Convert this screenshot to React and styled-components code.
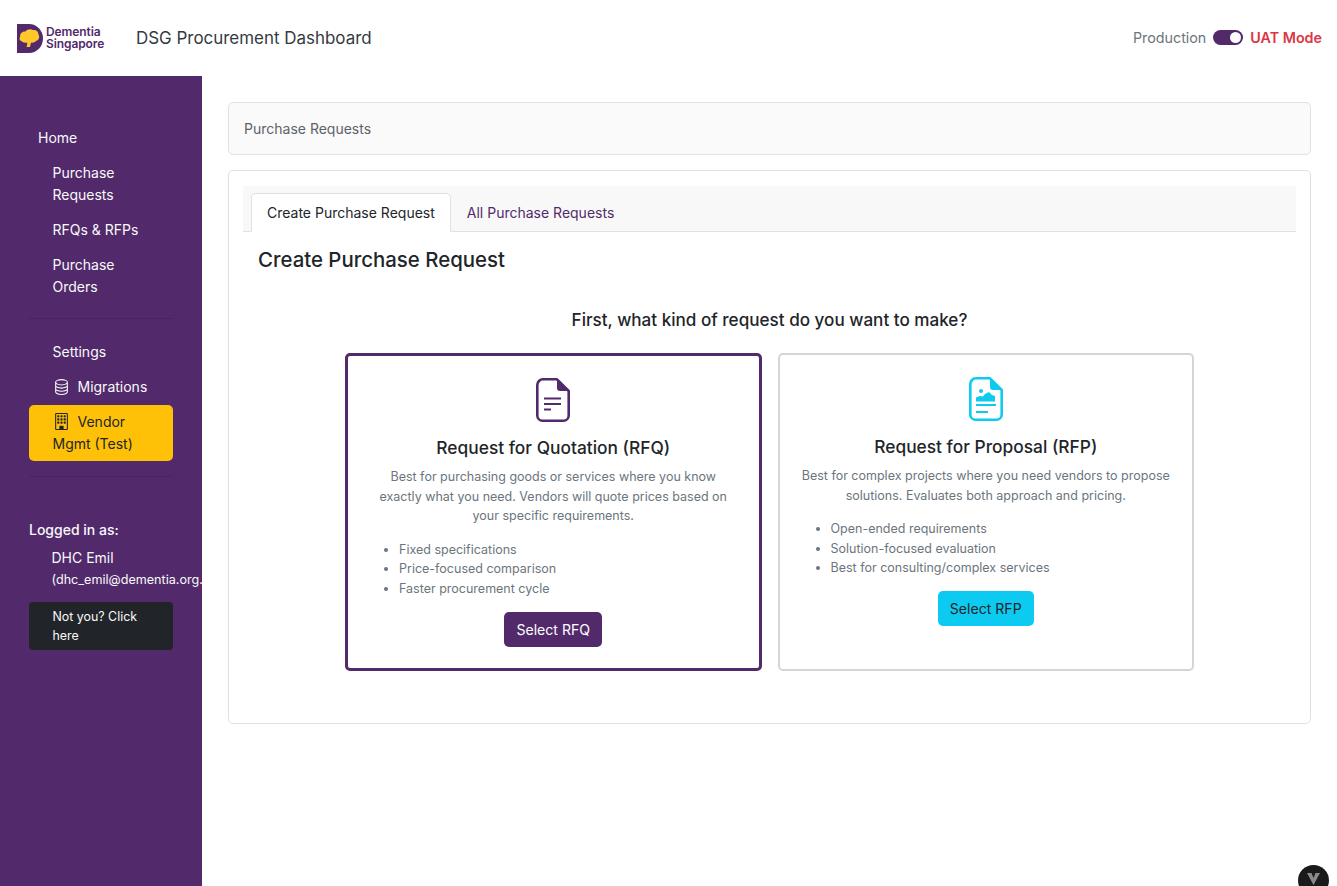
import React from 'react';
import styled, { createGlobalStyle } from 'styled-components';
import { BsDatabase, BsBuilding } from 'react-icons/bs';

const GlobalStyle = createGlobalStyle`
  * {
    box-sizing: border-box;
  }
  html,
  body {
    margin: 0;
    padding: 0;
    background: #fff;
    color: #212529;
    font-family: Inter, 'Liberation Sans', sans-serif;
    font-size: 14px;
  }
`;

const Page = styled.div`
  width: 1337px;
  height: 886px;
  overflow: hidden;
  position: relative;
  display: flex;
  flex-direction: column;
`;

const Header = styled.header`
  height: 76px;
  flex: none;
  display: flex;
  align-items: center;
  padding: 0 15px 0 17px;
`;

const Logo = styled.div`
  display: flex;
  align-items: center;
  gap: 2px;
  width: 119px;
`;

const LogoText = styled.div`
  color: #522a6b;
  font-size: 12px;
  font-weight: 600;
  line-height: 12px;
  letter-spacing: -0.1px;
`;

const Title = styled.div`
  font-size: 16.95px;
  color: #343a40;
  margin-top: -1px;
`;

const ModeSwitch = styled.div`
  margin-left: auto;
  display: flex;
  align-items: center;
  font-size: 14.3px;
  color: #6c757d;
  margin-top: -1px;
`;

const Toggle = styled.span`
  width: 30px;
  height: 15px;
  border-radius: 8px;
  background: #522a6b;
  margin: 0 7px;
  display: flex;
  justify-content: flex-end;
  align-items: center;
  padding: 0 2px;
  &::after {
    content: '';
    width: 11px;
    height: 11px;
    border-radius: 50%;
    background: #fff;
  }
`;

const ModeLabel = styled.span`
  color: #dc3545;
  font-weight: 600;
`;

const Body = styled.div`
  flex: 1;
  display: flex;
  min-height: 0;
`;

const Sidebar = styled.aside`
  width: 202px;
  flex: none;
  background: #522a6b;
  color: #f8f9fa;
  padding: 44.5px 29px 0;
`;

const NavGroup = styled.nav`
  display: flex;
  flex-direction: column;
`;

const NavLink = styled.a`
  display: block;
  color: #f8f9fa;
  font-size: 14px;
  line-height: 22px;
  padding: 6.5px 16px 6.5px ${(p) => (p.$top ? '9px' : '23.5px')};
`;

const IconGap = styled.span`
  display: inline-flex;
  vertical-align: -3px;
  margin-right: 8px;
  font-size: 17px;
`;

const Divider = styled.hr`
  border: 0;
  border-top: 1px solid rgba(0, 0, 0, 0.1);
  margin: ${(p) => p.$margin};
`;

const VendorButton = styled.a`
  display: block;
  background: #ffc107;
  color: #212529;
  border-radius: 5px;
  font-size: 14px;
  line-height: 22px;
  height: 56.5px;
  padding: 6.5px 16px 6.5px 23.5px;
`;

const LoggedLabel = styled.div`
  font-size: 14px;
  line-height: 21px;
  margin-bottom: 7px;
  font-weight: 500;
`;

const UserName = styled.div`
  font-size: 14px;
  line-height: 21px;
  padding-left: 22.5px;
  margin-bottom: 1px;
`;

const UserMail = styled.div`
  font-size: 12.6px;
  line-height: 21px;
  padding-left: 22.5px;
  white-space: nowrap;
  width: 173px;
  overflow: hidden;
`;

const NotYou = styled.a`
  display: block;
  margin-top: 12.5px;
  background: #212529;
  color: #f8f9fa;
  border-radius: 4px;
  font-size: 12.4px;
  line-height: 19px;
  height: 48px;
  padding: 5px 16px 5px 23.5px;
`;

const Main = styled.main`
  flex: 1;
  min-width: 0;
  padding: 26px 26px 0;
  display: flex;
  flex-direction: column;
  gap: 15px;
`;

const Breadcrumb = styled.div`
  height: 53px;
  border: 1px solid #dee2e6;
  border-radius: 5px;
  background: #fafafa;
  display: flex;
  align-items: center;
  padding: 0 15px;
  color: #5c636a;
  font-size: 14px;
`;

const Panel = styled.section`
  height: 554px;
  border: 1px solid #dee2e6;
  border-radius: 5px;
  padding: 15px 14px;
`;

const Tabs = styled.div`
  height: 46px;
  background: #f8f8f8;
  border-bottom: 1px solid #dee2e6;
  padding: 7px 0 0 8px;
  display: flex;
`;

const Tab = styled.a`
  height: 39px;
  display: flex;
  align-items: center;
  padding: 0 15px;
  font-size: 14px;
  border: 1px solid transparent;
  border-radius: 5px 5px 0 0;
  color: ${(p) => (p.$active ? '#212529' : '#522a6b')};
  background: ${(p) => (p.$active ? '#fff' : 'transparent')};
  border-color: ${(p) => (p.$active ? '#dee2e6 #dee2e6 #fff' : 'transparent')};
`;

const Heading = styled.h2`
  margin: 14px 0 0 15px;
  font-size: 20.4px;
  line-height: 27px;
  font-weight: 500;
  color: #212529;
`;

const Question = styled.h3`
  margin: 35px 0 0;
  text-align: center;
  font-size: 17.1px;
  line-height: 24px;
  font-weight: 500;
  color: #212529;
`;

const Choices = styled.div`
  margin-top: 21px;
  display: flex;
  justify-content: center;
  gap: 16px;
`;

const Choice = styled.article`
  width: 416.5px;
  height: 318px;
  border-radius: 5px;
  border: ${(p) => (p.$selected ? '3px solid #522a6b' : '2px solid #d5d5d5')};
  padding: 22px 21px 0;
  display: flex;
  flex-direction: column;
  align-items: center;
`;

const ChoiceTitle = styled.h4`
  margin: 14px 0 0;
  font-size: 17.35px;
  line-height: 24px;
  font-weight: 500;
  color: #212529;
  text-align: center;
`;

const ChoiceText = styled.p`
  margin: 7px 0 0;
  font-size: 12.5px;
  line-height: 19.6px;
  color: #6c757d;
  text-align: center;
`;

const Points = styled.ul`
  align-self: stretch;
  list-style: disc;
  margin: 14px 0 0;
  padding: 0 0 0 30px;
  font-size: 12.5px;
  line-height: 19.6px;
  color: #6c757d;
`;

const SelectButton = styled.button`
  margin-top: 13.5px;
  height: 34.5px;
  padding: 0 12px;
  border: 0;
  border-radius: 5px;
  font-family: inherit;
  font-size: 14.1px;
  background: ${(p) => p.$bg};
  color: ${(p) => p.$fg};
`;

const DevBadge = styled.div`
  position: absolute;
  left: 1298px;
  top: 865px;
  width: 31px;
  height: 31px;
  border-radius: 50%;
  background: #1a1a1a;
  display: flex;
  justify-content: center;
  padding-top: 8px;
`;

const LogoMark = () => (
  <svg width="27" height="29" viewBox="0 0 27 29">
    <path d="M0 0h12a14 14.500 0 0 1 0 29H0z" fill="#522a6b" />
    <path
      d="M3 12c.5-3.500 3-5 5.500-4.500 1.500-2.500 5.500-3 7.500-1.500 3-.5 5.500 1.500 5.500 4.500 1.500 2.500 .5 5.500-2.500 6.500-1.500 1.500-3.500 2-5 1.500-.5 1.500-.5 3-1 4.500h-3.500c.5-1.500 1-3 .5-4.500-2.500 .5-4.500 0-5.500-1.500-2 0-2.500-3-1-5z"
      fill="#ffc72c"
    />
  </svg>
);

const DocIcon = ({ color, children }) => (
  <svg width="34" height="44" viewBox="0 0 34 44" fill="none">
    <path
      d="M7 1.300h14L32.700 13v24.500a5.200 5.200 0 0 1-5.200 5.200H6.500a5.200 5.200 0 0 1-5.200-5.200V7A5.700 5.700 0 0 1 7 1.300z"
      stroke={color}
      strokeWidth="2.600"
      strokeLinejoin="round"
    />
    <path d="M21 1.300L32.700 13H24a3 3 0 0 1-3-3z" fill={color} />
    {children}
  </svg>
);

const App = () => {
  return (
    <Page>
      <GlobalStyle />
      <Header>
        <Logo>
          <LogoMark />
          <LogoText>
            Dementia
            <br />
            Singapore
          </LogoText>
        </Logo>
        <Title>DSG Procurement Dashboard</Title>
        <ModeSwitch>
          Production
          <Toggle />
          <ModeLabel>UAT Mode</ModeLabel>
        </ModeSwitch>
      </Header>
      <Body>
        <Sidebar>
          <NavGroup>
            <NavLink $top>Home</NavLink>
            <NavLink>Purchase Requests</NavLink>
            <NavLink>RFQs &amp; RFPs</NavLink>
            <NavLink>Purchase Orders</NavLink>
          </NavGroup>
          <Divider $margin="13.5px 0 15.5px" />
          <NavGroup>
            <NavLink>Settings</NavLink>
            <NavLink>
              <IconGap>
                <BsDatabase />
              </IconGap>
              Migrations
            </NavLink>
            <VendorButton>
              <IconGap>
                <BsBuilding />
              </IconGap>
              Vendor Mgmt (Test)
            </VendorButton>
          </NavGroup>
          <Divider $margin="15px 0 41.5px" />
          <LoggedLabel>Logged in as:</LoggedLabel>
          <UserName>DHC Emil</UserName>
          <UserMail>(dhc_emil@dementia.org.sg)</UserMail>
          <NotYou>Not you? Click here</NotYou>
        </Sidebar>
        <Main>
          <Breadcrumb>Purchase Requests</Breadcrumb>
          <Panel>
            <Tabs>
              <Tab $active>Create Purchase Request</Tab>
              <Tab>All Purchase Requests</Tab>
            </Tabs>
            <Heading>Create Purchase Request</Heading>
            <Question>First, what kind of request do you want to make?</Question>
            <Choices>
              <Choice $selected>
                <DocIcon color="#522a6b">
                  <path d="M8 20.500h17M8 26h17M8 31.500h7" stroke="#522a6b" strokeWidth="2.200" />
                </DocIcon>
                <ChoiceTitle>Request for Quotation (RFQ)</ChoiceTitle>
                <ChoiceText>
                  Best for purchasing goods or services where you know exactly what you need. Vendors will quote
                  prices based on your specific requirements.
                </ChoiceText>
                <Points>
                  <li>Fixed specifications</li>
                  <li>Price-focused comparison</li>
                  <li>Faster procurement cycle</li>
                </Points>
                <SelectButton $bg="#522a6b" $fg="#fff">
                  Select RFQ
                </SelectButton>
              </Choice>
              <Choice>
                <DocIcon color="#0dcaf0">
                  <circle cx="12" cy="14" r="2" fill="#0dcaf0" />
                  <path d="M7 24.500v-4l4-1.500 3 .5 2-2.500 4-2 3 3 3 1v5.500z" fill="#0dcaf0" />
                  <path d="M7 28h20M7 35h12" stroke="#0dcaf0" strokeWidth="2.200" />
                </DocIcon>
                <ChoiceTitle>Request for Proposal (RFP)</ChoiceTitle>
                <ChoiceText>
                  Best for complex projects where you need vendors to propose solutions. Evaluates both approach and
                  pricing.
                </ChoiceText>
                <Points>
                  <li>Open-ended requirements</li>
                  <li>Solution-focused evaluation</li>
                  <li>Best for consulting/complex services</li>
                </Points>
                <SelectButton $bg="#0dcaf0" $fg="#212529">
                  Select RFP
                </SelectButton>
              </Choice>
            </Choices>
          </Panel>
        </Main>
      </Body>
      <DevBadge>
        <svg width="13" height="12" viewBox="0 0 13 12">
          <path d="M0 0h4.500l2 5 2-5H13L6.500 12z" fill="#8a8a8a" />
        </svg>
      </DevBadge>
    </Page>
  );
};

export default App;
